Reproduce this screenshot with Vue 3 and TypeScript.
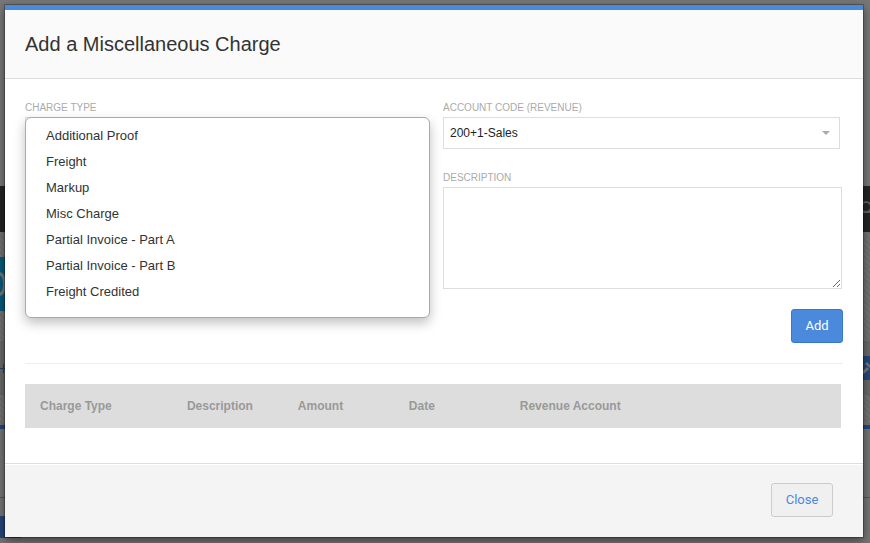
<script setup lang="ts">
import { ref } from 'vue'

const chargeTypes: string[] = [
  'Additional Proof',
  'Freight',
  'Markup',
  'Misc Charge',
  'Partial Invoice - Part A',
  'Partial Invoice - Part B',
  'Freight Credited',
]
const columns: string[] = ['Charge Type', 'Description', 'Amount', 'Date', 'Revenue Account']

const chargeType = ref('')
const menuOpen = ref(true)
const chargeDate = ref('')
const amount = ref('')
const account = ref('200+1-Sales')
const description = ref('')

function choose(type: string): void {
  chargeType.value = type
  menuOpen.value = false
}
</script>

<template>
  <div class="screen">
    <div class="page" aria-hidden="true">
      <div class="band top"></div>
      <div class="band nav">
        <svg class="search" width="14" height="18" viewBox="0 0 14 18">
          <circle cx="10" cy="7" r="5" />
          <path d="M6 12 H14" />
        </svg>
      </div>
      <div class="band hero"><span class="logo"><svg width="5" height="24" viewBox="0 0 5 24"><path d="M0 1.5 C6 4 6 20 0 22.5" /></svg></span></div>
      <div class="band tools">
        <svg class="plus" width="5" height="9" viewBox="0 0 5 9"><path d="M0 4.5H5M3.5 0V9" /></svg>
        <span class="edit"><svg width="7" height="16" viewBox="0 0 7 16"><path d="M0 11 L4 7 L6 9 L2 13 L0 14 Z M2 4 L4 2 L7 5 V8 Z" /></svg></span>
      </div>
      <div class="band texture"></div>
      <div class="band rule"></div>
      <div class="band body"></div>
      <div class="band bottom"><span class="chip"></span></div>
    </div>

    <section class="dialog" role="dialog" aria-modal="true" aria-labelledby="dialog-title">
      <header class="head">
        <h1 id="dialog-title">Add a Miscellaneous Charge</h1>
      </header>

      <form class="content" @submit.prevent>
        <div class="columns">
          <div class="column">
            <div class="field">
              <label for="charge-type">Charge Type</label>
              <div class="anchor">
                <button id="charge-type" class="box" type="button" aria-haspopup="listbox" :aria-expanded="menuOpen" @click="menuOpen = !menuOpen">{{ chargeType }}</button>
                <ul v-if="menuOpen" class="menu" role="listbox" aria-label="Charge Type">
                  <li v-for="type in chargeTypes" :key="type">
                    <button type="button" role="option" :aria-selected="type === chargeType" @click="choose(type)">{{ type }}</button>
                  </li>
                </ul>
              </div>
            </div>
            <div class="field unlabelled">
              <input v-model="chargeDate" class="box" type="text" aria-label="Date" />
            </div>
            <div class="field unlabelled">
              <input v-model="amount" class="box" type="text" aria-label="Amount" />
            </div>
          </div>

          <div class="column">
            <div class="field account">
              <label for="account">Account Code (Revenue)</label>
              <div class="select">
                <select id="account" v-model="account" class="box">
                  <option>200+1-Sales</option>
                </select>
                <svg class="caret" width="8" height="4" viewBox="0 0 8 4"><path d="M0 0H8L4 4Z" /></svg>
              </div>
            </div>
            <div class="field">
              <label for="description">Description</label>
              <textarea id="description" v-model="description" class="box"></textarea>
            </div>
          </div>
        </div>

        <div class="actions"><button class="add" type="submit">Add</button></div>

        <div class="charges">
          <table>
            <colgroup>
              <col class="c-type" /><col class="c-desc" /><col class="c-mid" /><col class="c-mid" /><col />
            </colgroup>
            <thead>
              <tr><th v-for="column in columns" :key="column" scope="col">{{ column }}</th></tr>
            </thead>
          </table>
        </div>
      </form>

      <footer class="foot"><button class="close" type="button">Close</button></footer>
    </section>
  </div>
</template>

<style>
body {
  background: #6b6b6b;
}
</style>

<style scoped>
.screen,
.screen * {
  box-sizing: border-box;
}
.screen {
  position: relative;
  min-height: 100vh;
  padding: 5px 7px 6px 5px;
  font-family: "Liberation Sans", Arial, sans-serif;
  font-size: 13px;
  color: #333;
}
.page {
  position: absolute;
  inset: 0;
  display: flex;
  flex-direction: column;
  overflow: hidden;
}
.band {
  flex: none;
  display: flex;
  align-items: center;
  justify-content: space-between;
}
.top {
  height: 186px;
  background: #777;
}
.nav {
  height: 46px;
  justify-content: flex-end;
  background: #242424;
}
.search {
  fill: none;
  stroke: #606060;
  stroke-width: 2;
}
.hero {
  height: 109px;
  align-items: flex-start;
  padding-top: 25px;
  background: repeating-linear-gradient(45deg, #747474 0 2px, #6e6e6e 2px 4px);
}
.logo {
  display: flex;
  align-items: center;
  width: 6px;
  height: 54px;
  background: #08597b;
}
.logo svg {
  fill: none;
  stroke: #777;
  stroke-width: 3;
}
.tools {
  height: 54px;
  background: #686868;
}
.plus {
  fill: none;
  stroke: #263f66;
  stroke-width: 1;
}
.edit {
  display: flex;
  align-items: center;
  justify-content: flex-end;
  width: 12px;
  height: 24px;
  background: #234679;
}
.edit svg {
  fill: #777;
}
.texture {
  height: 30px;
  background: repeating-linear-gradient(45deg, #747474 0 2px, #6e6e6e 2px 4px);
}
.rule {
  height: 4px;
  background: #234679;
}
.body {
  height: 69px;
  border-bottom: 1px solid #555;
  background: #747474;
}
.bottom {
  flex: 1;
  align-items: flex-start;
  background: #747474;
}
.chip {
  width: 21px;
  height: 22px;
  margin-top: 18px;
  background: #234679;
}
.dialog {
  position: relative;
  border-top: 5px solid #4a89dc;
  background: #fff;
  box-shadow: 0 0 0 1px rgba(0, 0, 0, 0.25), 0 3px 9px rgba(0, 0, 0, 0.5);
}
.head {
  height: 69px;
  padding: 20px;
  border-bottom: 1px solid #ddd;
  background: #fafafa;
}
h1 {
  margin: 0;
  font-size: 20px;
  font-weight: 400;
  line-height: 28px;
}
.content {
  padding: 20px 20px 35px;
}
.columns {
  display: grid;
  grid-template-columns: 1fr 1fr;
  gap: 18px;
}
.column {
  display: flex;
  flex-direction: column;
  gap: 20px;
}
.field {
  display: flex;
  flex-direction: column;
}
.unlabelled {
  padding-top: 18px;
}
label {
  height: 18px;
  font-size: 10px;
  line-height: 18px;
  text-transform: uppercase;
  color: #aaa;
}
.box {
  display: block;
  width: 100%;
  height: 32px;
  padding: 0 6px;
  border: 1px solid #ddd;
  border-radius: 0;
  background: #fff;
  color: #222;
  font: inherit;
  font-size: 12px;
}
select.box {
  appearance: none;
}
textarea.box {
  height: 102px;
  padding: 6px;
  resize: vertical;
}
.column:last-child {
  padding-right: 1px;
}
.account {
  padding-right: 2px;
}
.select {
  display: grid;
  align-items: center;
}
.select > * {
  grid-area: 1 / 1;
}
.caret {
  justify-self: end;
  margin-right: 10px;
  fill: #aaa;
  pointer-events: none;
}
.anchor {
  position: relative;
}
.menu {
  position: absolute;
  top: 0;
  left: 0;
  right: -5px;
  z-index: 1;
  height: 201px;
  margin: 0;
  padding: 4px 0;
  border: 1px solid #aaa;
  border-radius: 6px;
  background: #fff;
  box-shadow: 0 5px 12px rgba(0, 0, 0, 0.25);
  list-style: none;
}
.menu button {
  display: block;
  width: 100%;
  height: 26px;
  padding: 0 20px;
  border: 0;
  background: none;
  color: #333;
  font: inherit;
  text-align: left;
}
.actions {
  display: flex;
  justify-content: flex-end;
  padding: 20px 0;
}
.add,
.close {
  height: 34px;
  padding: 0 0 2px;
  border: 1px solid #3a78cc;
  border-radius: 3px;
  font-family: Roboto, "Liberation Sans", sans-serif;
  font-size: 13px;
}
.add {
  width: 52px;
  background: #4a89dc;
  color: #fff;
}
.charges {
  padding: 20px 2px 0 0;
  border-top: 1px solid #eee;
}
table {
  width: 100%;
  border-collapse: collapse;
  table-layout: fixed;
}
.c-type {
  width: 18%;
}
.c-desc,
.c-mid {
  width: 13.6%;
}
th {
  height: 44px;
  padding: 0 15px;
  background: #ddd;
  color: #999;
  font-size: 12px;
  font-weight: 700;
  text-align: left;
}
.foot {
  display: flex;
  justify-content: flex-end;
  padding: 19px 30px 20px;
  border-top: 1px solid #ddd;
  background: #f4f4f4;
  box-shadow: inset 0 1px 0 #fff;
}
.close {
  width: 62px;
  border-color: #ccc;
  background: #f0f0f0;
  color: #4a89dc;
}
</style>
